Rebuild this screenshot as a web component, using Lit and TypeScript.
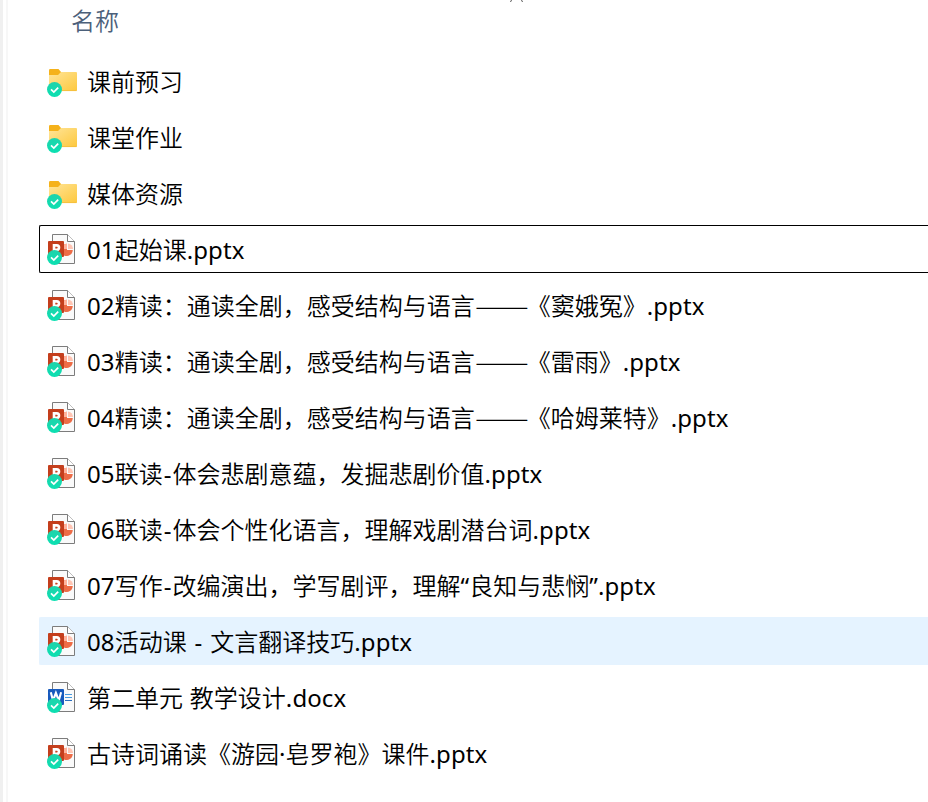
import { LitElement, html, svg, css } from "lit";
import { customElement, property } from "lit/decorators.js";

type Kind = "folder" | "pptx" | "docx";
interface Entry { kind: Kind; name: string; state?: "focused" | "selected"; }

const ENTRIES: Entry[] = [
  { kind: "folder", name: "课前预习" },
  { kind: "folder", name: "课堂作业" },
  { kind: "folder", name: "媒体资源" },
  { kind: "pptx", name: "01起始课.pptx", state: "focused" },
  { kind: "pptx", name: "02精读：通读全剧，感受结构与语言——《窦娥冤》.pptx" },
  { kind: "pptx", name: "03精读：通读全剧，感受结构与语言——《雷雨》.pptx" },
  { kind: "pptx", name: "04精读：通读全剧，感受结构与语言——《哈姆莱特》.pptx" },
  { kind: "pptx", name: "05联读-体会悲剧意蕴，发掘悲剧价值.pptx" },
  { kind: "pptx", name: "06联读-体会个性化语言，理解戏剧潜台词.pptx" },
  { kind: "pptx", name: "07写作-改编演出，学写剧评，理解“良知与悲悯”.pptx" },
  { kind: "pptx", name: "08活动课 - 文言翻译技巧.pptx", state: "selected" },
  { kind: "docx", name: "第二单元 教学设计.docx" },
  { kind: "pptx", name: "古诗词诵读《游园·皂罗袍》课件.pptx" },
];

@customElement("file-icon")
class FileIcon extends LitElement {
  @property() kind: Kind = "folder";
  static styles = css`
    :host { display: block; width: 32px; height: 48px; flex: none; }
    svg { display: block; }
  `;
  private folder() {
    return svg`
      <path d="M3 13.2Q3 12 4.2 12H12.5L15 15V20H3Z" fill="#f5b21b"/>
      <path d="M3 18H12L15 15H30Q31 15 31 16V33Q31 34 30 34H4Q3 34 3 33Z" fill="url(#fold)"/>
      <path d="M3.5 33.6H30.6" stroke="#f3bd3b" stroke-width=".8"/>`;
  }
  private page() {
    return svg`<path d="M6.5 9.5H21.5L28.5 16.5V38.5H6.5Z" fill="#fafafa" stroke="#7c7c7c"/>
      <path d="M21.5 9.5V16.5H28.5" fill="#fff" stroke="#7c7c7c"/>`;
  }
  private pptx() {
    return svg`${this.page()}
      <path d="M18 19.5Q19.5 18.8 21 18.8V25H26.8A6.2 6.2 0 0 1 18 30.4Z" fill="#ed6c47"/>
      <path d="M18 19.5Q19.5 18.8 21 18.8V24H18Z" fill="#ffb39d"/>
      <path d="M22 18.5A5.5 5.5 0 0 1 27 24H22Z" fill="#ffc4b3"/>
      <rect x="2" y="16" width="16" height="16" rx="1" fill="#c43e1c"/>
      <path d="M8 29V20.4H10.8Q13 20.4 13 22.6T10.8 24.8H8" fill="none" stroke="#fff" stroke-width="2.6"/>`;
  }
  private docx() {
    return svg`${this.page()}
      <path d="M19 21.5H26M19 24.5H26" stroke="#4a9ce0"/><path d="M19 27.5H26" stroke="#2b6fc0"/>
      <rect x="2" y="16" width="16" height="16" rx="1" fill="#185abd"/>
      <path d="M4.8 19.2L7 27.5L9.9 20L12.8 27.5L15.1 19.2" fill="none" stroke="#fff" stroke-width="2.1"/>`;
  }
  render() {
    const art = this.kind === "folder" ? this.folder() : this.kind === "pptx" ? this.pptx() : this.docx();
    return html`<svg width="32" height="48" viewBox="0 0 32 48">
      <defs>
        <linearGradient id="fold" x1="0" y1="0" x2="1" y2="1"><stop offset="0" stop-color="#ffe59a"/><stop offset="1" stop-color="#fdc83d"/></linearGradient>
        <linearGradient id="ok" x1="0" y1="0" x2="0" y2="1"><stop offset="0" stop-color="#1fd3ab"/><stop offset="1" stop-color="#0be0b2"/></linearGradient>
      </defs>
      ${art}
      <circle cx="8.5" cy="32.5" r="7.5" fill="url(#ok)"/>
      <path d="M5 32.4L7.8 35.1L12.2 30.6" fill="none" stroke="#fff" stroke-width="1.7"/>
    </svg>`;
  }
}

@customElement("file-row")
class FileRow extends LitElement {
  @property({ attribute: false }) entry!: Entry;
  static styles = css`
    :host { display: block; height: 48px; }
    .row { box-sizing: border-box; height: 48px; display: flex; align-items: center; padding-left: 6px; gap: 9px; border: 1px solid transparent; border-right: 0; border-radius: 2px 0 0 2px; }
    .focused { border-color: #000; }
    .selected { background: #e5f3ff; border-color: #e5f3ff; }
    .name { white-space: pre; line-height: 34px; padding-top: 2px; font-weight: 350; word-spacing: .6px; }
    .latin { font-weight: 400; letter-spacing: .1px; }
    .hyphen { font-weight: 400; display: inline-block; width: 9.9px; text-align: center; }
    .dash { display: inline-block; width: 52px; font-family: "Noto Sans CJK SC", sans-serif; line-height: 1; transform: scaleX(1.34); transform-origin: left; }
  `;
  private piece(text: string) {
    if (text === "——") return html`<span class="dash">${text}</span>`;
    if (text === "-") return html`<span class="hyphen">${text}</span>`;
    if (/^[a-z0-9.“”·]+$/.test(text)) return html`<span class="latin">${text}</span>`;
    return text;
  }
  render() {
    const { kind, name, state } = this.entry;
    return html`<div class="row ${state ?? ""}"><file-icon .kind=${kind}></file-icon><span class="name">${name.split(/(——|-|[a-z0-9.“”·]+)/).map((t) => this.piece(t))}</span></div>`;
  }
}

@customElement("app-root")
class AppRoot extends LitElement {
  static styles = css`
    :host { display: flex; height: 802px; background: #fff; overflow: hidden; color: #000; font: 24px/34px "Noto Sans", "Noto Sans CJK SC", sans-serif; }
    .scroll { width: 3px; background: #f0f0f0; flex: none; }
    .edge { width: 2px; margin-left: 3px; background: #f7f7f7; flex: none; }
    .pane { flex: 1; min-width: 0; padding-left: 31px; }
    .head { height: 57px; display: flex; align-items: flex-start; }
    .title { width: 439px; padding-left: 32px; margin-top: 4px; color: #4c607a; font-weight: 350; }
    .sort { display: block; }
    .list { display: flex; flex-direction: column; gap: 8px; }
  `;
  render() {
    return html`
      <div class="scroll"></div><div class="edge"></div>
      <div class="pane">
        <div class="head">
          <span class="title">名称</span>
          <svg class="sort" width="14" height="3" viewBox="0 0 14 3"><path d="M1.5 0L.5 2M11.5 0L12.5 2" stroke="#555" fill="none"/></svg>
        </div>
        <div class="list">${ENTRIES.map((e) => html`<file-row .entry=${e}></file-row>`)}</div>
      </div>`;
  }
}
